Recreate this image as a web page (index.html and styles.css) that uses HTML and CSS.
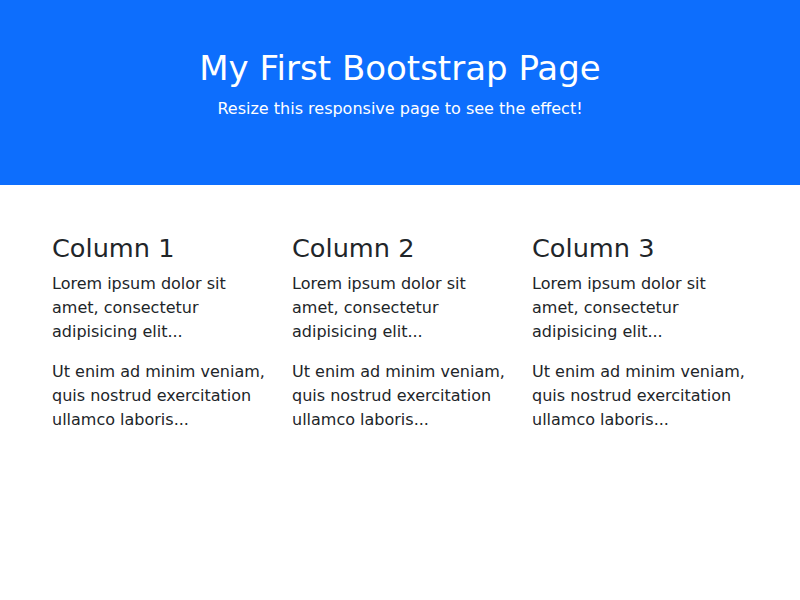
FILE: index.html
```html
<!DOCTYPE html>
<html lang="en">
<head>
<meta charset="utf-8">
<title>Bootstrap Example</title>
<link rel="stylesheet" href="styles.css">
</head>
<body>
<div class="hero">
  <h1 class="hero-title">My First Bootstrap Page</h1>
  <p class="hero-sub">Resize this responsive page to see the effect!</p>
</div>
<div class="container">
  <div class="row">
    <div class="col">
      <h3 class="col-title">Column 1</h3>
      <p>Lorem ipsum dolor sit amet, consectetur adipisicing elit...</p>
      <p>Ut enim ad minim veniam, quis nostrud exercitation ullamco laboris...</p>
    </div>
    <div class="col">
      <h3 class="col-title">Column 2</h3>
      <p>Lorem ipsum dolor sit amet, consectetur adipisicing elit...</p>
      <p>Ut enim ad minim veniam, quis nostrud exercitation ullamco laboris...</p>
    </div>
    <div class="col">
      <h3 class="col-title">Column 3</h3>
      <p>Lorem ipsum dolor sit amet, consectetur adipisicing elit...</p>
      <p>Ut enim ad minim veniam, quis nostrud exercitation ullamco laboris...</p>
    </div>
  </div>
</div>
</body>
</html>
```
FILE: styles.css
```css
*, *::before, *::after { box-sizing: border-box; }
body {
  margin: 0;
  font-family: "DejaVu Sans", sans-serif;
  font-size: 16px;
  line-height: 1.5;
  color: #212529;
  background: #fff;
}
.hero {
  padding: 48px;
  background: #0d6efd;
  color: #fff;
  text-align: center;
}
.hero-title {
  margin: 0 0 8px;
  font-size: 34px;
  font-weight: 500;
  line-height: 1.2;
}
.hero-sub {
  margin: 0 0 16px;
}
.container {
  max-width: 720px;
  margin: 48px auto 0;
  padding: 0 12px;
}
.row {
  display: flex;
  margin: 0 -12px;
}
.col {
  flex: 0 0 33.333333%;
  padding: 0 12px;
}
.col-title {
  margin: 0 0 8px;
  font-size: 25.6px;
  font-weight: 500;
  line-height: 1.2;
}
.col p {
  margin: 0 0 16px;
}
```
